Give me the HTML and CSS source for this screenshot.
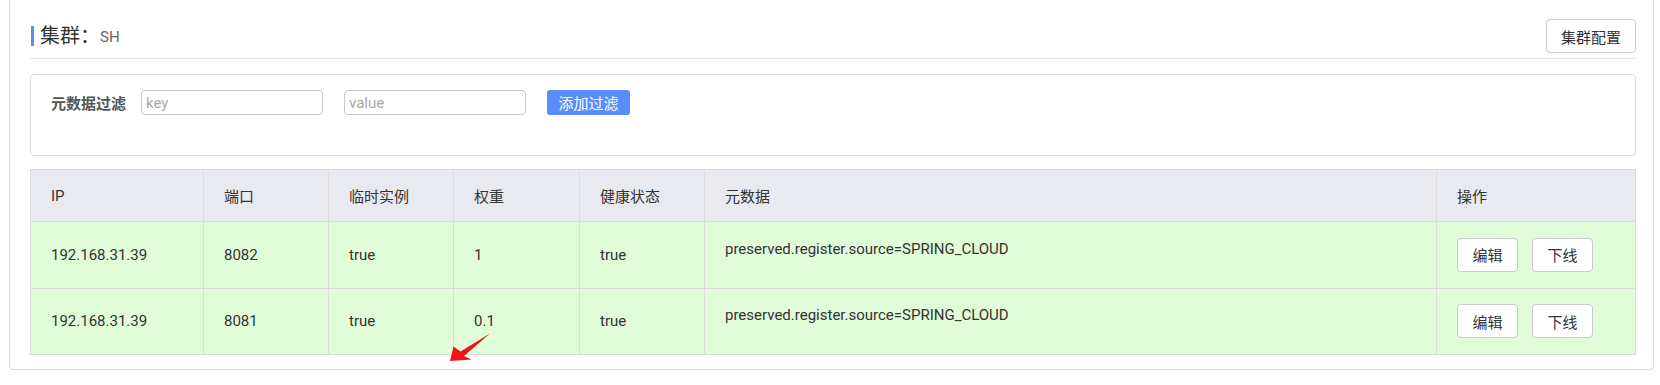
FILE: index.html
```html
<!DOCTYPE html>
<html lang="zh-CN">
<head>
  <meta charset="UTF-8">
  <meta name="viewport" content="width=device-width, initial-scale=1.0">
  <title>集群详情</title>
  <link rel="stylesheet" href="styles.css">
</head>
<body>
  <div class="card">
    <div class="card-header">
      <h2 class="title">集群：<span class="cluster-name">SH</span></h2>
      <button class="btn">集群配置</button>
    </div>

    <div class="filter-box">
      <span class="filter-label">元数据过滤</span>
      <input type="text" class="filter-input" placeholder="key">
      <input type="text" class="filter-input" placeholder="value">
      <button class="btn-primary">添加过滤</button>
    </div>

    <table class="instance-table">
      <colgroup>
        <col style="width: 173px">
        <col style="width: 125px">
        <col style="width: 125px">
        <col style="width: 126px">
        <col style="width: 125px">
        <col style="width: 732px">
        <col>
      </colgroup>
      <thead>
        <tr>
          <th>IP</th>
          <th>端口</th>
          <th>临时实例</th>
          <th>权重</th>
          <th>健康状态</th>
          <th>元数据</th>
          <th>操作</th>
        </tr>
      </thead>
      <tbody>
        <tr>
          <td>192.168.31.39</td>
          <td>8082</td>
          <td>true</td>
          <td>1</td>
          <td>true</td>
          <td><div class="meta">preserved.register.source=SPRING_CLOUD</div></td>
          <td>
            <div class="actions">
              <button class="btn btn-small">编辑</button>
              <button class="btn btn-small">下线</button>
            </div>
          </td>
        </tr>
        <tr>
          <td>192.168.31.39</td>
          <td>8081</td>
          <td>true</td>
          <td>0.1</td>
          <td>true</td>
          <td><div class="meta">preserved.register.source=SPRING_CLOUD</div></td>
          <td>
            <div class="actions">
              <button class="btn btn-small">编辑</button>
              <button class="btn btn-small">下线</button>
            </div>
          </td>
        </tr>
      </tbody>
    </table>
  </div>

  <!-- annotation arrow drawn over the screenshot -->
  <svg class="arrow" width="140" height="95" viewBox="400 290 140 95">
    <polygon points="450,361 453.5,346.5 460.5,351.5 490,333.5 464,356 471.5,359.5" fill="#f01414"/>
  </svg>
</body>
</html>
```

FILE: styles.css
```css
body {
  margin: 0;
  padding: 0;
  font-family: Roboto, "Noto Sans CJK SC", sans-serif;
  font-size: 15px;
  color: #333;
  background: #fff;
}

.card {
  margin: 0 6px 0 9px;
  padding: 19px 17px 14px 20px;
  border: 1px solid #dcdcdc;
  border-top: none;
  border-radius: 0 0 4px 4px;
}

.card-header {
  display: flex;
  align-items: center;
  justify-content: space-between;
  padding-bottom: 5px;
  border-bottom: 1px solid #e4e4e4;
}

.title {
  margin: 0;
  padding-left: 6px;
  border-left: 3px solid #5b8cf5;
  height: 20px;
  line-height: 20px;
  font-size: 20px;
  font-weight: normal;
  color: #333;
  margin-left: 1px;
}

.cluster-name {
  font-size: 15px;
  color: #666;
  vertical-align: top;
  position: relative;
  top: 1px;
}

.btn {
  height: 34px;
  padding: 0 14px;
  background: #fff;
  border: 1px solid #c8c8d0;
  border-radius: 4px;
  font-family: inherit;
  font-size: 15px;
  color: #333;
  cursor: pointer;
}

.btn-small {
  width: 61px;
  padding: 0;
}

.filter-box {
  display: flex;
  align-items: center;
  margin-top: 15px;
  padding: 15px 20px 40px;
  border: 1px solid #dcdcdc;
  border-radius: 4px;
}

.filter-label {
  font-weight: bold;
  color: #555;
  margin-right: 15px;
  width: 75px;
}

.filter-input {
  width: 182px;
  height: 25px;
  margin-right: 21px;
  padding: 0 4px;
  border: 1px solid #c6c5d2;
  border-radius: 4px;
  box-sizing: border-box;
  font-family: inherit;
  font-size: 15px;
  color: #333;
}

.filter-input::placeholder {
  color: #a8a8a8;
}

.btn-primary {
  width: 83px;
  height: 25px;
  padding: 0;
  background: #5a8cfb;
  border: none;
  border-radius: 3px;
  color: #fff;
  font-family: inherit;
  font-size: 15px;
  cursor: pointer;
}

.instance-table {
  width: 100%;
  margin-top: 13px;
  border-collapse: collapse;
  table-layout: fixed;
}

.instance-table th,
.instance-table td {
  padding: 0 20px;
  border: 1px solid #dcdcdc;
  text-align: left;
  font-weight: normal;
  white-space: nowrap;
}

.instance-table th {
  height: 51px;
  background: #e9eaef;
}

.instance-table td {
  height: 65.5px;
  background: #e1fcd9;
}

.meta {
  padding-bottom: 12px;
}

.actions {
  display: flex;
  gap: 14px;
}

.arrow {
  position: absolute;
  left: 400px;
  top: 290px;
}
```
